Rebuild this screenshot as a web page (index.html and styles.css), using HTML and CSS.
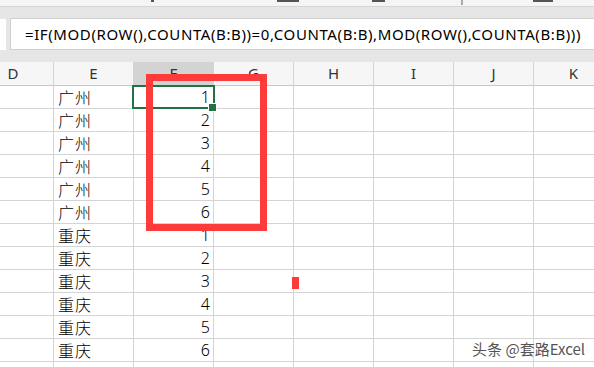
FILE: index.html
```html
<!DOCTYPE html>
<html lang="zh-CN">

<head>
    <meta charset="UTF-8">
    <title>套路Excel</title>
    <link rel="stylesheet" href="styles.css">
</head>

<body>
    <div class="top-strip">
        <span class="frag" style="margin-left:151px;width:3px"></span>
        <span class="frag" style="margin-left:123px;width:22px"></span>
        <span class="frag" style="margin-left:73px;width:13px"></span>
        <span class="frag light" style="margin-left:76px;width:2px"></span>
        <span class="frag" style="margin-left:70px;width:20px"></span>
    </div>

    <div class="formula-area">
        <div class="name-box"></div>
        <div class="formula-box">=IF(MOD(ROW(),COUNTA(B:B))=0,COUNTA(B:B),MOD(ROW(),COUNTA(B:B)))</div>
    </div>

    <div class="sheet">
        <div class="col-head">D</div>
        <div class="col-head">E</div>
        <div class="col-head active">F</div>
        <div class="col-head">G</div>
        <div class="col-head">H</div>
        <div class="col-head">I</div>
        <div class="col-head">J</div>
        <div class="col-head">K</div>
    </div>

    <div class="sheet" id="rows"></div>

    <!-- 標註框 -->
    <div class="mark-box"></div>
    <div class="mark-dot"></div>

    <div class="watermark">头条 @套路Excel</div>

    <script>
        const data = [
            ['广州', 1], ['广州', 2], ['广州', 3], ['广州', 4], ['广州', 5], ['广州', 6],
            ['重庆', 1], ['重庆', 2], ['重庆', 3], ['重庆', 4], ['重庆', 5], ['重庆', 6],
            ['', '']
        ];
        const rows = document.getElementById('rows');
        data.forEach(function(row, i) {
            const cells = ['', row[0], row[1], '', '', '', '', ''];
            cells.forEach(function(value, c) {
                const cell = document.createElement('div');
                cell.className = 'cell';
                if (c === 1) cell.classList.add('text');
                if (c === 2) cell.classList.add('num');
                if (c === 2 && i === 0) cell.classList.add('selected');
                cell.textContent = value;
                rows.appendChild(cell);
            });
        });
    </script>
</body>

</html>
```

FILE: styles.css
```css
:root {
    --grid: #d4d4d4;
    --band: #e6e6e6;
    --green: #217346;
    --red: #fd3b3b;
}

* {
    margin: 0;
    padding: 0;
    box-sizing: border-box;
}

body {
    width: 594px;
    height: 367px;
    overflow: hidden;
    position: relative;
    background: #fff;
    font-family: 'Noto Sans', 'Noto Sans CJK SC', sans-serif;
    color: #000;
}

.top-strip {
    height: 7px;
    background: #f5f5f5;
    border-bottom: 1px solid #d6d6d6;
    display: flex;
    align-items: flex-start;
    overflow: hidden;
}

.frag {
    display: inline-block;
    height: 2px;
    background: #555;
}

.frag.light {
    background: #aaa;
    height: 5px;
}

.formula-area {
    background: var(--band);
    height: 55px;
    padding: 11px 0 12px;
    display: flex;
    gap: 4px;
}

.name-box {
    width: 6px;
    background: #fff;
    margin-top: 1px;
}

.formula-box {
    flex: 1;
    background: #fff;
    border: 1px solid #d0d0d0;
    border-right: none;
    font-size: 15px;
    line-height: 30px;
    padding-left: 14px;
    white-space: nowrap;
    overflow: hidden;
    letter-spacing: 0.6px;
}

.sheet {
    display: grid;
    grid-template-columns: 54px repeat(7, 80px);
    width: 614px;
}

.col-head {
    height: 24px;
    background: #f6f6f6;
    border-right: 1px solid var(--grid);
    border-bottom: 1px solid #c8c8c8;
    font-size: 15px;
    line-height: 23px;
    color: #333;
    text-align: center;
}

.col-head:first-child {
    text-indent: -27px;
}

.col-head.active {
    background: #d3d3d3;
    border-bottom-color: var(--green);
}

.cell {
    height: 23px;
    border-right: 1px solid var(--grid);
    border-bottom: 1px solid var(--grid);
    font-size: 15px;
    line-height: 22px;
    position: relative;
}

.cell.text {
    font-family: 'Noto Sans CJK SC', sans-serif;
    font-weight: 300;
    font-size: 16px;
    padding-left: 4px;
    letter-spacing: 1px;
}

.cell.num {
    text-align: right;
    padding-right: 3px;
    font-family: 'Noto Sans', sans-serif;
    font-weight: 300;
    font-size: 16px;
}

.cell.selected::after {
    content: '';
    position: absolute;
    top: -1px;
    left: -2px;
    right: -2px;
    bottom: -1px;
    border: 2px solid var(--green);
}

.cell.selected::before {
    content: '';
    position: absolute;
    right: -4px;
    bottom: -4px;
    width: 7px;
    height: 7px;
    background: var(--green);
    border: 1px solid #fff;
    z-index: 1;
}

.mark-box {
    position: absolute;
    left: 146px;
    top: 74px;
    width: 121px;
    height: 157px;
    border: 7px solid var(--red);
}

.mark-dot {
    position: absolute;
    left: 292px;
    top: 277px;
    width: 7px;
    height: 12px;
    background: var(--red);
}

.watermark {
    position: absolute;
    right: 9px;
    bottom: 8px;
    font-family: 'Noto Sans CJK SC', sans-serif;
    font-size: 15px;
    color: #555;
    text-shadow: 0 0 2px #fff, 0 0 2px #fff;
}
```
